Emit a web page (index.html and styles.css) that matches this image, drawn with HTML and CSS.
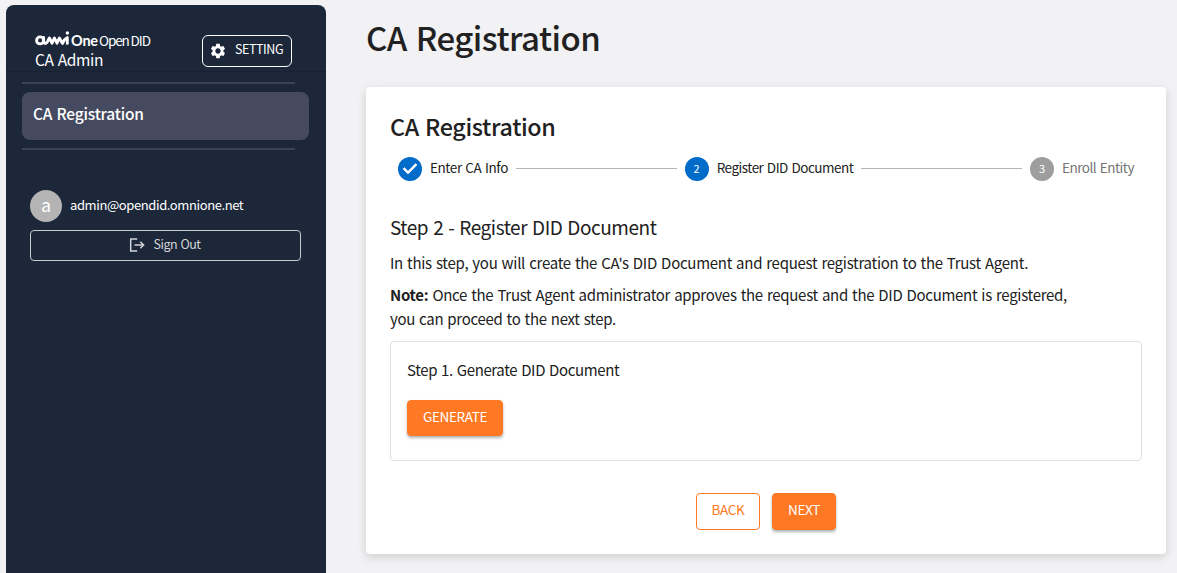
FILE: index.html
```html
<!DOCTYPE html>
<html lang="en">
<head>
<meta charset="utf-8">
<title>CA Admin</title>
<link rel="stylesheet" href="styles.css">
</head>
<body>
<div class="app">
  <aside class="sidebar">
    <header class="side-head">
      <div class="brand">
        <div class="logo">
          <svg class="logo-mark" viewBox="0 0 35 15" width="35" height="15" fill="none" stroke="#fff" stroke-width="2.9" stroke-linecap="round" stroke-linejoin="round"><circle cx="5.1" cy="9.4" r="3.5"/><path d="M8.6 6.5V9.5Q9 12.6 11 12.4Q12.4 12 13 9.5L14.4 7L17 12.2L19.4 7L22 12.2L24.4 7L27.4 12.4L29.6 8.6L32.3 6.6V12.4"/><circle cx="32.4" cy="2" r="1.7" fill="#fff" stroke="none"/></svg>
          <span class="logo-one">One</span>
          <span class="logo-open">Open DID</span>
        </div>
        <div class="brand-sub">CA Admin</div>
      </div>
      <button class="btn-setting">
        <svg viewBox="0 0 24 24" width="18" height="18" fill="#fff"><path d="M19.14 12.94c.04-.3.06-.61.06-.94 0-.32-.02-.64-.07-.94l2.03-1.58c.18-.14.23-.41.12-.61l-1.92-3.32c-.12-.22-.37-.29-.59-.22l-2.39.96c-.5-.38-1.03-.7-1.62-.94l-.36-2.54c-.04-.24-.24-.41-.48-.41h-3.84c-.24 0-.43.17-.47.41l-.36 2.54c-.59.24-1.13.57-1.62.94l-2.39-.96c-.22-.08-.47 0-.59.22L2.74 8.87c-.12.21-.08.47.12.61l2.03 1.58c-.05.3-.09.63-.09.94s.02.64.07.94l-2.03 1.58c-.18.14-.23.41-.12.61l1.92 3.32c.12.22.37.29.59.22l2.39-.96c.5.38 1.03.7 1.62.94l.36 2.54c.05.24.24.41.48.41h3.84c.24 0 .44-.17.47-.41l.36-2.54c.59-.24 1.13-.56 1.62-.94l2.39.96c.22.08.47 0 .59-.22l1.92-3.32c.12-.22.07-.47-.12-.61l-2.01-1.58zM12 15.6c-1.98 0-3.6-1.62-3.6-3.6s1.62-3.6 3.6-3.6 3.6 1.62 3.6 3.6-1.62 3.6-3.6 3.6z"/></svg>
        <span>SETTING</span>
      </button>
    </header>
    <hr class="divider">
    <a class="nav-item">CA Registration</a>
    <hr class="divider">
    <section class="account">
      <div class="user">
        <span class="avatar">a</span>
        <span class="email">admin@opendid.omnione.net</span>
      </div>
      <button class="btn-signout">
        <svg viewBox="0 0 16 14" width="16" height="14" fill="none" stroke="#d2d4d8" stroke-width="1.5"><path d="M8.2 1H1.7V13H8.2M5.5 7H14.6M11.3 3.8L14.6 7L11.3 10.2"/></svg>
        <span>Sign Out</span>
      </button>
    </section>
  </aside>
  <main class="main">
    <h1 class="page-title">CA Registration</h1>
    <section class="card">
      <h2 class="card-title">CA Registration</h2>
      <div class="stepper">
        <div class="step done">
          <span class="dot"><svg viewBox="0 0 24 24" width="24" height="24"><path fill="#fff" stroke="#fff" stroke-width=".6" d="M10 17l-5-5 1.4-1.4 3.6 3.6 7.6-7.6L19 8l-9 9z"/></svg></span>
          <span class="label-info">Enter CA Info</span>
        </div>
        <span class="line"></span>
        <div class="step active">
          <span class="dot">2</span>
          <span class="label-document">Register DID Document</span>
        </div>
        <span class="line"></span>
        <div class="step">
          <span class="dot">3</span>
          <span class="label-entity">Enroll Entity</span>
        </div>
      </div>
      <h3 class="step-title">Step 2 - Register DID Document</h3>
      <p class="text intro">In this step, you will create the CA's DID Document and request registration to the Trust Agent.</p>
      <p class="text note"><b>Note:</b> Once the Trust Agent administrator approves the request and the DID Document is registered,<br><span class="note-end">you can proceed to the next step.</span></p>
      <div class="panel">
        <p class="text panel-title">Step 1. Generate DID Document</p>
        <button class="btn btn-primary btn-generate">GENERATE</button>
      </div>
      <div class="actions">
        <button class="btn btn-outline">BACK</button>
        <button class="btn btn-primary">NEXT</button>
      </div>
    </section>
  </main>
</div>
</body>
</html>
```
FILE: styles.css
```css
* { box-sizing: border-box; }

body {
  margin: 0;
  background: #f2f2f4;
  color: #212121;
  font-family: "Noto Sans CJK KR", "Noto Sans", sans-serif;
  font-size: 15.5px;
}

h1, h2, h3, p { margin: 0; font-weight: 400; }
button { font-family: inherit; padding: 0; margin: 0; }
svg { display: block; flex: none; }

.app { display: flex; height: 573px; overflow: hidden; padding: 5px 11px 0 6px; }

.sidebar {
  width: 320px;
  flex: none;
  background: #1c273a;
  border-radius: 8px 8px 0 0;
  color: #fff;
}
.side-head {
  display: flex;
  justify-content: space-between;
  height: 67px;
  padding: 27px 34px 0 29px;
  border-bottom: 1px solid #172133;
}
.logo { display: flex; height: 15px; line-height: 16px; white-space: nowrap; }
.logo-mark { margin-top: -1px; }
.logo-one { width: 28px; margin: 2px 0 0 1px; font: 700 14.5px/14px Lato, sans-serif; letter-spacing: -.2px; }
.logo-open { font-size: 13.5px; letter-spacing: -1.1px; }
.brand-sub { line-height: 24px; letter-spacing: -.36px; word-spacing: 1px; }
.btn-setting {
  display: flex;
  width: 90px;
  height: 32px;
  margin-top: 3px;
  padding: 6px 0 0 6px;
  gap: 8px;
  border: 1px solid #fff;
  border-radius: 6px;
  background: none;
  color: #fff;
  font-size: 12.5px;
  line-height: 14px;
  letter-spacing: -.42px;
}
.divider { width: 273px; height: 2px; margin: 10px 0 0 16px; border: 0; background: #3b4254; }
.nav-item {
  display: block;
  width: 287px;
  height: 48px;
  margin: 8px 0 -2px 16px;
  padding: 9px 11px;
  border-radius: 8px;
  background: #454a60;
  font-weight: 500;
  line-height: 24px;
  letter-spacing: -.2px;
  word-spacing: 1px;
}
.account { padding: 40px 25px 0 24px; }
.user { display: flex; gap: 8px; height: 32px; font-size: 13px; line-height: 29px; }
.email { letter-spacing: -.4px; }
.avatar { width: 32px; height: 32px; border-radius: 50%; background: #b4b4b4; text-align: center; font-size: 18px; line-height: 28px; }
.btn-signout {
  display: flex;
  justify-content: center;
  gap: 9px;
  width: 100%;
  height: 31px;
  margin-top: 8px;
  padding: 7px 2px 0 0;
  border: 1px solid #c6c9ce;
  border-radius: 4px;
  background: none;
  color: #d2d4d8;
  font-size: 12.5px;
  line-height: 12px;
  letter-spacing: -.5px;
  word-spacing: 1px;
}

.main { flex: 1; padding-left: 40px; }
.page-title { height: 82px; padding-top: 11px; font-size: 33px; line-height: 42px; font-weight: 500; letter-spacing: -.52px; word-spacing: 2px; }
.card {
  height: 467px;
  padding: 23px 24px 0;
  border-radius: 4px;
  background: #fff;
  box-shadow: 0 3px 10px rgba(0, 0, 0, .15);
}
.card-title { font-size: 23.3px; line-height: 32px; font-weight: 500; letter-spacing: -.35px; word-spacing: 1.3px; }
.stepper { display: flex; height: 24px; margin-top: 15px; padding: 0 8px; }
.step { display: flex; gap: 8px; color: #757575; font-size: 13.5px; line-height: 21px; white-space: nowrap; word-spacing: 1px; }
.step.done, .step.active { color: #212121; }
.label-info { letter-spacing: -.41px; }
.label-document { letter-spacing: -.5px; }
.label-entity { letter-spacing: -.48px; }
.dot { width: 24px; height: 24px; border-radius: 50%; background: #9e9e9e; color: #fff; font-size: 11px; line-height: 22px; text-align: center; }
.done .dot, .active .dot { background: #006bc9; }
.line { flex: 1; height: 1px; margin: 11px 8px 0; background: #b5b5b5; }
.step-title { margin-top: 31px; font-size: 19px; line-height: 30px; letter-spacing: -.46px; word-spacing: 1.2px; }
.text { font-size: 15px; line-height: 24px; white-space: nowrap; word-spacing: 1px; }
.intro { margin-top: 9px; letter-spacing: -.28px; }
.note { margin-top: 8px; letter-spacing: -.295px; }
.note b { font-weight: 700; }
.note-end { letter-spacing: -.3px; }
.panel { height: 120px; margin-top: 10px; padding: 16px 16px 0; border: 1px solid #e0e0e0; border-radius: 4px; }
.panel-title { letter-spacing: -.38px; }
.btn { height: 37px; padding: 0 0 5px; border: 1px solid #ff7823; border-radius: 4px; font-size: 13.5px; line-height: 24px; letter-spacing: -.36px; }
.btn-primary { background: #ff7823; color: #fff; box-shadow: 0 2px 3px rgba(0, 0, 0, .3); }
.btn-outline { background: #fff; color: #ff7823; }
.btn-generate { display: block; width: 96px; height: 36px; margin-top: 18px; }
.actions { display: flex; justify-content: center; gap: 12px; margin-top: 32px; }
.actions .btn { width: 64px; }
```
